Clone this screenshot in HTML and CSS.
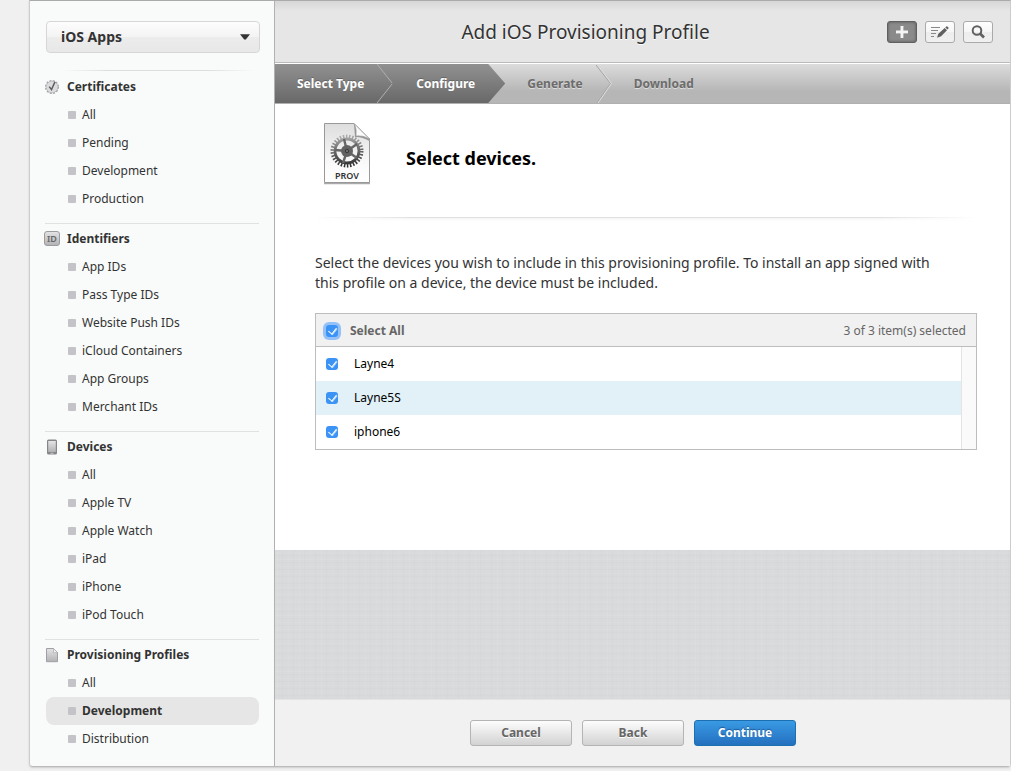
FILE: index.html
```html
<!DOCTYPE html>
<html lang="en">
<head>
<meta charset="utf-8">
<title>Add iOS Provisioning Profile</title>
<link rel="stylesheet" href="styles.css">
</head>
<body>
<div class="panel">
  <aside class="sidebar">
    <div class="platform">
      <select class="platform-select" aria-label="Platform"><option>iOS Apps</option></select>
      <svg class="platform-arrow" width="10" height="6" viewBox="0 0 10 6" aria-hidden="true"><path d="M0 .3h10L6 5.2q-1 .9-2 0z" fill="#333"/></svg>
    </div>
    <nav class="menu">
      <section class="group">
        <h2 class="group-title">
          <svg width="16" height="16" viewBox="0 0 16 16" aria-hidden="true"><circle cx="8" cy="8" r="6.3" fill="#dcdcde" stroke="#a5a5a8" stroke-width="1.5" stroke-dasharray="1.9 1.4"/><circle cx="8" cy="8" r="5.8" fill="#dcdcde" stroke="#b4b4b8" stroke-width=".6"/><path d="M5.200 7.6l2.300 3L11 2.800" fill="none" stroke="#5c5c60" stroke-width="1.500"/></svg>
          Certificates</h2>
        <ul class="items">
          <li><a class="item" href="#">All</a></li>
          <li><a class="item" href="#">Pending</a></li>
          <li><a class="item" href="#">Development</a></li>
          <li><a class="item" href="#">Production</a></li>
        </ul>
      </section>
      <section class="group">
        <h2 class="group-title">
          <svg width="16" height="16" viewBox="0 0 16 16" aria-hidden="true"><defs><linearGradient id="grey" x2="0" y2="1"><stop stop-color="#e4e4e6"/><stop offset="1" stop-color="#b2b2b5"/></linearGradient></defs><rect x=".5" y=".5" width="15" height="14" rx="2.500" fill="url(#grey)" stroke="#9c9ca0"/><text x="8" y="11" class="id-label">ID</text></svg>
          Identifiers</h2>
        <ul class="items">
          <li><a class="item" href="#">App IDs</a></li>
          <li><a class="item" href="#">Pass Type IDs</a></li>
          <li><a class="item" href="#">Website Push IDs</a></li>
          <li><a class="item" href="#">iCloud Containers</a></li>
          <li><a class="item" href="#">App Groups</a></li>
          <li><a class="item" href="#">Merchant IDs</a></li>
        </ul>
      </section>
      <section class="group">
        <h2 class="group-title">
          <svg width="16" height="16" viewBox="0 0 16 16" aria-hidden="true"><rect x="3" y=".5" width="10" height="15" rx="1.500" fill="#85858a"/><rect x="4.200" y="2" width="7.600" height="11" fill="url(#grey)"/><rect x="6.500" y="13.800" width="3" height="1" fill="#c9c9cc"/></svg>
          Devices</h2>
        <ul class="items">
          <li><a class="item" href="#">All</a></li>
          <li><a class="item" href="#">Apple TV</a></li>
          <li><a class="item" href="#">Apple Watch</a></li>
          <li><a class="item" href="#">iPad</a></li>
          <li><a class="item" href="#">iPhone</a></li>
          <li><a class="item" href="#">iPod Touch</a></li>
        </ul>
      </section>
      <section class="group">
        <h2 class="group-title">
          <svg width="16" height="16" viewBox="0 0 16 16" aria-hidden="true"><path d="M2.500 1.500h7l4 4.200v9h-11z" fill="url(#grey)" stroke="#a0a0a4"/><path d="M9.500 1.500v4.200h4z" fill="#f6f6f7" stroke="#a0a0a4" stroke-width=".6"/></svg>
          Provisioning Profiles</h2>
        <ul class="items">
          <li><a class="item" href="#">All</a></li>
          <li><a class="item current" href="#" aria-current="page">Development</a></li>
          <li><a class="item" href="#">Distribution</a></li>
        </ul>
      </section>
    </nav>
  </aside>

  <main class="main">
    <header class="header">
      <h1 class="title">Add iOS Provisioning Profile</h1>
      <div class="tools">
        <button class="tool active" type="button" aria-label="Add"><svg width="14" height="14" viewBox="0 0 14 14"><path d="M5.800 2h3v4h4v3h-4v4h-3V9h-4V6h4z" fill="#555" opacity=".6"/><path d="M5.500 1h3v4.500H13v3H8.500V13h-3V8.500H1v-3h4.500z" fill="#f4f4f4"/></svg></button>
        <button class="tool" type="button" aria-label="Edit"><svg width="18" height="14" viewBox="0 0 18 14"><path d="M0 2.500h9M0 5.500h7M0 8.500h5M0 11.500h3" stroke="#888" stroke-width="1"/><path d="M6 12.800l1.400-4L13.700 3l2.300 2.300-5.900 5.900zM14.300 2.400l1-1q.5-.5 1 0l1.100 1.100q.5.500 0 1l-.9.900z" fill="#606060"/></svg></button>
        <button class="tool" type="button" aria-label="Search"><svg width="16" height="16" viewBox="0 0 16 16"><circle cx="7" cy="6.500" r="4.300" fill="none" stroke="#606060" stroke-width="2"/><path d="M10 9.500l4 4" stroke="#606060" stroke-width="2.600"/></svg></button>
      </div>
    </header>

    <ol class="steps">
      <li class="step done">Select Type<svg class="chevron" width="16" height="39" viewBox="0 0 16 39" aria-hidden="true"><path d="M0 0l15.500 19.500L0 39" fill="none" stroke="#b0b0b0"/></svg></li>
      <li class="step done last" aria-current="step">Configure</li>
      <li class="step">Generate<svg class="chevron" width="16" height="39" viewBox="0 0 16 39" aria-hidden="true"><path d="M0 1l14.500 18.500L1 39" fill="none" stroke="#a4a4a4"/><path d="M1 0l14.500 19.500L2 39" fill="none" stroke="#dcdcdc"/></svg></li>
      <li class="step">Download</li>
    </ol>

    <section class="content">
      <div class="intro">
        <svg width="48" height="64" viewBox="0 0 48 64" aria-hidden="true">
          <defs>
            <linearGradient id="paper" x2="0" y2="1"><stop stop-color="#dedede"/><stop offset=".7" stop-color="#fafafa"/><stop offset="1" stop-color="#fff"/></linearGradient>
            <linearGradient id="gear" gradientUnits="userSpaceOnUse" x1="24" y1="12" x2="26" y2="46"><stop stop-color="#b4b4b4"/><stop offset=".5" stop-color="#666"/><stop offset="1" stop-color="#2a2a2a"/></linearGradient>
          </defs>
          <path d="M1 61.500h46" stroke="#aaa" stroke-width="1.500"/>
          <path d="M1.500 1.500H31L46.500 17v43.500h-45z" fill="url(#paper)" stroke="#999"/>
          <path d="M31 2l1 13q6-.5 14.500 4V17z" fill="#999"/>
          <path d="M31 1.500q3 5 2 12.500 7-1 13.500 3z" fill="#fafafa" stroke="#999" stroke-width=".7"/>
          <circle cx="24" cy="29" r="14.500" fill="none" stroke="url(#gear)" stroke-width="4" stroke-dasharray="1.500 1.537"/>
          <circle cx="24" cy="29" r="12" fill="none" stroke="url(#gear)" stroke-width="2.800"/>
          <path d="M24 29l-3-12M24 29l10-7M24 29l10 7M24 29l-4 12M24 29l-12-1" stroke="#666" stroke-width="2.400"/>
          <circle cx="24" cy="29" r="6" fill="#626262"/>
          <circle cx="24" cy="29" r="2" fill="#333"/><circle cx="24" cy="29" r=".8" fill="#bbb"/>
          <text x="24" y="57" class="prov-label">PROV</text>
        </svg>
        <h2 class="heading">Select devices.</h2>
      </div>
      <div class="rule"></div>
      <p class="text">Select the devices you wish to include in this provisioning profile. To install an app signed with this profile on a device, the device must be included.</p>

      <div class="devices">
        <div class="devices-head">
          <label class="select-all"><input class="check focused" type="checkbox" checked>Select All</label>
          <span>3 of 3 item(s) selected</span>
        </div>
        <div class="devices-body">
          <table class="device-table">
            <tr><td class="cell-check"><input class="check" type="checkbox" id="d1" checked></td><td><label for="d1">Layne4</label></td></tr>
            <tr><td class="cell-check"><input class="check" type="checkbox" id="d2" checked></td><td><label for="d2">Layne5S</label></td></tr>
            <tr><td class="cell-check"><input class="check" type="checkbox" id="d3" checked></td><td><label for="d3">iphone6</label></td></tr>
          </table>
          <div class="scroll-track"></div>
        </div>
      </div>
    </section>

    <div class="linen"></div>

    <footer class="footer">
      <button class="button" type="button">Cancel</button>
      <button class="button" type="button">Back</button>
      <button class="button primary" type="button">Continue</button>
    </footer>
  </main>
</div>
</body>
</html>
```
FILE: styles.css
```css
* { box-sizing: border-box; }

body {
  margin: 0;
  background: #f0f0f0;
  color: #333;
  font-family: "Noto Sans", "Open Sans", sans-serif;
  font-size: 12px;
  line-height: 20px;
}

h1, h2, p, ul, ol { margin: 0; padding: 0; }
ul, ol { list-style: none; }
button, select, input { font: inherit; color: inherit; margin: 0; }
svg { flex: none; display: block; }

.panel {
  display: flex;
  margin: 0 0 4px 29px;
  min-height: calc(100vh - 4px);
  border: 1px solid #ccc;
  border-top-color: #aaa;
  border-bottom-color: #bbb;
  border-radius: 0 0 4px 4px;
  box-shadow: 0 1px 2px #ccc;
}

/* Sidebar */
.sidebar {
  flex: none;
  width: 245px;
  padding: 20px 15px 12px;
  background: #f9fbfa;
  border-right: 1px solid #b0b2b2;
  border-radius: 0 0 0 4px;
}

.platform {
  display: grid;
  align-items: center;
  margin-left: 1px;
  margin-right: -1px;
}

.platform-select, .platform-arrow { grid-area: 1 / 1; }

.platform-select {
  appearance: none;
  height: 32px;
  padding: 0 14px;
  border: 1px solid #d6d6d6;
  border-radius: 4px;
  background: linear-gradient(#fdfdfd, #f3f3f3 50%, #ececec 50%, #e8e8e8);
  font-size: 14px;
  font-weight: 700;
}

.platform-arrow { justify-self: end; margin-right: 10px; pointer-events: none; }

.menu { margin-top: 17px; }

.group {
  padding: 1px 0 10px;
  border-top: 1px solid #e0e2e1;
}

.group:first-child {
  padding-top: 2px;
  border-image: linear-gradient(90deg, transparent 8%, #ddd 30%, #ddd 75%, transparent 98%) 1;
}

.group:last-child { padding-bottom: 0; }

.group-title {
  display: flex;
  align-items: center;
  gap: 7px;
  height: 28px;
  margin-left: -1px;
  font-size: 12px;
  font-weight: 700;
}

.id-label {
  font: 600 9px "Noto Sans", sans-serif;
  text-anchor: middle;
  fill: #666;
}

.item {
  display: flex;
  align-items: center;
  gap: 6px;
  height: 28px;
  margin-left: 1px;
  padding-left: 22px;
  border-radius: 8px;
  color: inherit;
  text-decoration: none;
}

.item::before {
  content: "";
  width: 8px;
  height: 8px;
  border-radius: 1px;
  background: #c4c4c8;
}

.item.current {
  background: #e6e6e6;
  font-weight: 700;
}

/* Main column */
.main {
  flex: 1;
  min-width: 0;
  display: flex;
  flex-direction: column;
  background: #fff;
}

.header {
  display: grid;
  grid-template-columns: 1fr auto;
  align-items: center;
  height: 62px;
  padding: 0 17px;
  border-bottom: 1px solid #bbb;
  background: linear-gradient(#d6d6d6, #e6e6e6 10px);
}

.title {
  padding-right: 8px;
  font-size: 19px;
  font-weight: 400;
  text-align: center;
  text-shadow: 0 1px 0 #fff;
}

.tools { display: flex; gap: 8px; }

.tool {
  display: flex;
  align-items: center;
  justify-content: center;
  width: 30px;
  height: 22px;
  padding: 0;
  border: 1px solid #aaa;
  border-radius: 3px;
  background: linear-gradient(#fdfdfd, #f6f6f6 50%, #ededed 50%, #f0f0f0);
}

.tool.active {
  border-color: #606060;
  background: #8a8a8a;
  box-shadow: inset 0 0 3px #555;
}

.steps {
  display: flex;
  height: 40px;
  margin-top: 1px;
  background: linear-gradient(#dcdcdc, #b6b6b6 70%);
  border-bottom: 1px solid #b0b0b0;
}

.step {
  display: flex;
  align-items: center;
  gap: 13px;
  padding-left: 22px;
  color: #6c6c6c;
  font-weight: 700;
  text-shadow: 0 1px 0 #ddd;
}

.step.done {
  background: linear-gradient(#919191, #686868);
  color: #fff;
  text-shadow: 0 -1px 0 #666;
}

/* Overlaps the previous step so the two dark fills join without a seam */
.step.last {
  margin-left: -1px;
  padding-left: 24px;
  padding-right: 30px;
  clip-path: polygon(0 0, calc(100% - 17px) 0, 100% 50%, calc(100% - 17px) 100%, 0 100%);
}

.content { padding: 18px 33px 100px 40px; }

.intro {
  display: flex;
  align-items: center;
  gap: 35px;
  padding-left: 8px;
}

.prov-label {
  font: 600 9px "Noto Sans", sans-serif;
  text-anchor: middle;
  fill: #333;
}

.heading {
  padding-top: 8px;
  color: #000;
  font-size: 18px;
  font-weight: 700;
}

.rule {
  height: 4px;
  margin-top: 31px;
  background:
    linear-gradient(90deg, #fff, transparent 15%, transparent 85%, #fff),
    linear-gradient(#e0e0e0 1px, #f5f5f5 1px, #fff);
}

.text {
  margin-top: 32px;
  padding-right: 20px;
  font-size: 14px;
}

.devices {
  margin-top: 20px;
  border: 1px solid #bdbdbd;
}

.devices-head {
  display: flex;
  align-items: center;
  justify-content: space-between;
  height: 33px;
  padding: 2px 10px 0;
  border-bottom: 1px solid #bdbdbd;
  background: #f1f1f1;
  color: #666;
}

.select-all {
  display: flex;
  align-items: center;
  gap: 12px;
  font-weight: 700;
}

.check {
  appearance: none;
  display: grid;
  place-items: center;
  width: 12px;
  height: 12px;
  border-radius: 3px;
  background: #3b94f5;
}

.check::after {
  content: "";
  width: 4px;
  height: 7px;
  margin-bottom: 2px;
  border: solid #fff;
  border-width: 0 1px 1px 0;
  box-shadow: 1px 0 0 #ffffff80;
  transform: rotate(38deg);
}

.check:not(:checked) { background: #fff; border: 1px solid #aaa; }
.check:not(:checked)::after { display: none; }
.check.focused { box-shadow: 0 0 0 3px #94c2f8; }

.devices-body { display: flex; }

.device-table {
  flex: 1;
  border-collapse: collapse;
  color: #000;
}

.device-table td { height: 34px; padding: 0; }
.device-table .cell-check { width: 38px; padding-left: 10px; }
.device-table tr:nth-child(even) { background: #e2f0f7; }

.scroll-track {
  width: 15px;
  border-left: 1px solid #e4e4e4;
  background: #fafafa;
}

.linen {
  flex: 1;
  min-height: 100px;
  background:
    repeating-linear-gradient(90deg, transparent 0 2px, #ffffff0c 2px 3px, transparent 3px 7px, #00000003 7px 8px, transparent 8px 11px),
    repeating-linear-gradient(transparent 0 2px, #ffffff0c 2px 3px, transparent 3px 5px, #00000003 5px 6px, transparent 6px 7px),
    #d9dadc;
}

.footer {
  display: flex;
  align-items: center;
  justify-content: center;
  gap: 10px;
  height: 67px;
  padding-right: 19px;
  border-top: 1px solid #e4e4e4;
  background: #f1f1f1;
}

.button {
  width: 102px;
  height: 26px;
  padding: 0;
  border: 1px solid #b4b4b4;
  border-radius: 3px;
  background: linear-gradient(#fdfdfd, #d2d2d2);
  color: #666;
  font-weight: 700;
  text-shadow: 0 1px 0 #fff;
}

.button.primary {
  border-color: #1c6fb0;
  background: linear-gradient(#3a9ae4, #2470bf);
  color: #fff;
  text-shadow: 0 -1px 1px #1c5a95;
}
```
